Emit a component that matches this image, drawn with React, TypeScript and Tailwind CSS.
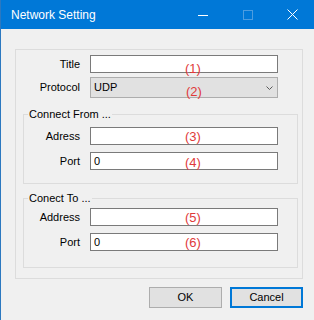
import type { ReactNode } from "react";

type FieldProps = {
  label: string;
  labelWidth: string;
  mark: string;
  markTop: string;
  value?: string;
  className?: string;
};

function Mark({ text, top }: { text: string; top: string }) {
  // red annotation drawn over the control
  return (
    <span
      className={`pointer-events-none absolute left-[95px] ${top} text-[13px] leading-[13px] text-[#e03a3a]`}
    >
      {text}
    </span>
  );
}

function Field({ label, labelWidth, mark, markTop, value = "", className = "" }: FieldProps) {
  return (
    <div className={`flex items-center gap-[10px] ${className}`}>
      <span className={`${labelWidth} text-right`}>{label}</span>
      <div className="relative h-[18px] w-[188px]">
        <input
          readOnly
          defaultValue={value}
          className="block h-full w-full border border-[#7a7a7a] bg-white pl-[3px] text-[11px] leading-[16px] text-black outline-none"
        />
        <Mark text={mark} top={markTop} />
      </div>
    </div>
  );
}

function Group({ title, children, className = "" }: { title: string; children: ReactNode; className?: string }) {
  return (
    <fieldset className={`ml-[7px] w-[275px] border border-[#dcdcdc] ${className}`}>
      <legend className="ml-[4px] px-[1px] text-[11px] leading-[15px]">{title}</legend>
      {children}
    </fieldset>
  );
}

function TitleBar() {
  return (
    <div className="flex h-[29px] items-center bg-[#0078d7] text-white">
      <span className="flex-1 pl-[10px] text-[12px] leading-[16px]">Network Setting</span>
      <div className="mr-[-1px] flex h-full">
        <div className="flex w-[45px] items-center justify-center">
          <svg width="10" height="10" viewBox="0 0 10 10">
            <path d="M0 5.5h10" stroke="white" strokeWidth="1" />
          </svg>
        </div>
        <div className="flex w-[45px] items-center justify-center">
          <svg width="10" height="10" viewBox="0 0 10 10">
            <rect x="0.5" y="0.5" width="9" height="9" fill="none" stroke="#4d9de0" strokeWidth="1" />
          </svg>
        </div>
        <div className="flex w-[45px] items-center justify-center">
          <svg width="11" height="11" viewBox="0 0 11 11">
            <path d="M0.5 0.5l10 10M10.5 0.5l-10 10" stroke="white" strokeWidth="1" />
          </svg>
        </div>
      </div>
    </div>
  );
}

export default function App() {
  return (
    <div className="h-[320px] w-[314px] overflow-hidden border-l border-[#2b78c0] bg-[#f0f0f0] font-['Liberation_Sans',Arial,sans-serif] text-[11px] leading-[13px] text-black">
      <TitleBar />
      <div className="pl-[14px] pt-[20px]">
        <div className="h-[230px] w-[288px] border border-[#dcdcdc] pt-[5px]">
          <Field label="Title" labelWidth="w-[64px]" mark="(1)" markTop="top-[7px]" />
          <div className="mt-[4px] flex items-center gap-[10px]">
            <span className="w-[64px] text-right">Protocol</span>
            <div className="relative flex h-[21px] w-[188px] items-center border border-[#adadad] bg-[#e1e1e1] pl-[3px] pr-[4px]">
              <span className="flex-1">UDP</span>
              <svg width="7" height="4" viewBox="0 0 7 4">
                <path d="M0.5 0.5l3 3 3-3" fill="none" stroke="#5a5a5a" strokeWidth="1" />
              </svg>
              <Mark text="(2)" top="top-[7px]" />
            </div>
          </div>

          <Group title="Connect From ..." className="mt-[9px] pb-[13px]">
            <Field label="Adress" labelWidth="w-[56px]" mark="(3)" markTop="top-[3px]" className="mt-[5px]" />
            <Field label="Port" labelWidth="w-[56px]" mark="(4)" markTop="top-[4px]" value="0" className="mt-[7px]" />
          </Group>

          <Group title="Conect To ..." className="mt-[7px] pb-[16px]">
            <Field label="Address" labelWidth="w-[56px]" mark="(5)" markTop="top-[3px]" className="mt-[2px]" />
            <Field label="Port" labelWidth="w-[56px]" mark="(6)" markTop="top-[3px]" value="0" className="mt-[7px]" />
          </Group>
        </div>

        <div className="mt-[8px] flex w-[288px] justify-end gap-[8px]">
          <button type="button" className="h-[21px] w-[73px] border border-[#adadad] bg-[#e1e1e1] text-[11px]">
            OK
          </button>
          <button type="button" className="h-[21px] w-[73px] border-2 border-[#0078d7] bg-[#e1e1e1] text-[11px]">
            Cancel
          </button>
        </div>
      </div>
    </div>
  );
}
